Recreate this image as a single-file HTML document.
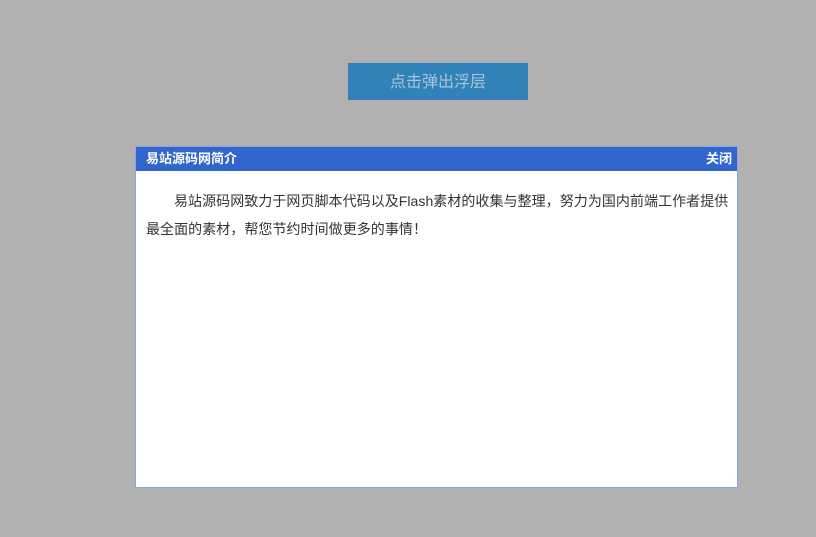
<!DOCTYPE html>
<html><head><meta charset="utf-8"><style>
body{margin:0;width:816px;height:537px;background:#b1b1b1;position:relative;overflow:hidden;font-family:"Liberation Sans","Noto Sans CJK SC",sans-serif}
.btn{position:absolute;left:348px;top:63px;width:180px;height:37px;background:#3182b8;color:#a9c4d8;font-size:16px;line-height:40px;text-align:center}
.dlg{position:absolute;left:135px;top:146px;width:601px;height:340px;background:#fff;border:1px solid #8aa6df}
.hd{height:24px;background:#3366cc;color:#fff;font-size:13px;font-weight:bold;line-height:24px;padding:0 10px}
.hd span{float:right;margin-right:-5px}
.bd{padding:16px 0 0 10px;font-size:14px;line-height:28px;color:#333;text-indent:28px;letter-spacing:0.05px;white-space:nowrap}
</style></head><body>
<div class="btn">点击弹出浮层</div>
<div class="dlg"><div class="hd">易站源码网简介<span>关闭</span></div>
<div class="bd">易站源码网致力于网页脚本代码以及Flash素材的收集与整理，努力为国内前端工作者提供<br>最全面的素材，帮您节约时间做更多的事情！</div></div>
</body></html>
